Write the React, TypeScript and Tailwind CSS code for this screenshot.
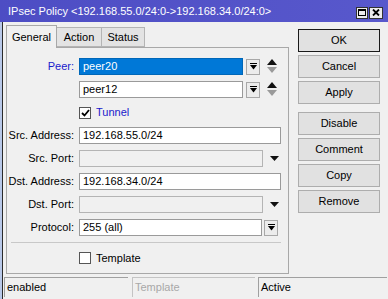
import React from 'react';

const font = "font-['Liberation_Sans',Arial,sans-serif]";

const DropBtn = () => (
  <div className="w-[14px] h-[16px] border border-[#a8a8a8] bg-[#ececec] flex items-center justify-center">
    <svg width="7" height="7" viewBox="0 0 7 7">
      <rect x="0" y="0" width="7" height="1" fill="#000" />
      <polygon points="0,2 7,2 3.5,6.5" fill="#000" />
    </svg>
  </div>
);

const UpDown = () => (
  <svg width="10" height="15" viewBox="0 0 10 15">
    <polygon points="5,0 10,6 0,6" fill="#111" />
    <polygon points="0,8 10,8 5,14" fill="#9a9a9a" />
  </svg>
);

const DownTri = () => (
  <svg width="9" height="5" viewBox="0 0 9 5">
    <polygon points="0,0 9,0 4.5,5" fill="#111" />
  </svg>
);

const Label = ({ text, blue }: { text: string; blue?: boolean }) => (
  <div className={`w-[72px] pr-[5px] text-right ${blue ? 'text-[#1a1acc]' : 'text-black'}`}>{text}</div>
);

const Row = ({ children }: { children: React.ReactNode }) => (
  <div className="flex items-center h-[23px]">{children}</div>
);

const Input = ({ w, value, disabled, selected }: { w: string; value?: string; disabled?: boolean; selected?: boolean }) => (
  <div
    className={`${w} h-[17px] border flex items-center pl-[3px] ${
      selected
        ? 'bg-[#0078d7] border-[#0067b8] text-white'
        : disabled
        ? 'bg-[#f0f0f0] border-[#b4b4b4]'
        : 'bg-white border-[#9a9a9a] text-black'
    }`}
  >
    {value}
  </div>
);

const Check = ({ checked }: { checked?: boolean }) => (
  <div className="w-[12px] h-[12px] border border-[#555] bg-white flex items-center justify-center">
    {checked && (
      <svg width="9" height="8" viewBox="0 0 9 8">
        <polyline points="1,4 3.5,6.5 8,1" fill="none" stroke="#000" strokeWidth="1.8" />
      </svg>
    )}
  </div>
);

const Btn = ({ text, def, mt }: { text: string; def?: boolean; mt: string }) => (
  <div
    className={`${mt} w-[82px] h-[23px] flex items-center justify-center bg-[#e1e1e1] border ${
      def ? 'border-[#1a1a1a]' : 'border-[#adadad]'
    }`}
  >
    {text}
  </div>
);

export default function App() {
  return (
    <div className={`w-[388px] h-[299px] bg-[#f0f0f0] overflow-hidden text-[11px] leading-none ${font}`}>
      <div className="h-[22px] bg-gradient-to-r from-[#4d4dc4] to-[#5858cc] flex items-center justify-between pl-[8px] pr-[5px] text-white text-[11px]">
        <span>IPsec Policy &lt;192.168.55.0/24:0-&gt;192.168.34.0/24:0&gt;</span>
        <div className="flex gap-[1px] mt-[3px]">
          <div className="w-[12px] h-[12px] bg-[#ececec] border border-[#333] flex items-center justify-center">
            <div className="w-[8px] h-[7px] border border-black border-t-2" />
          </div>
          <div className="w-[14px] h-[12px] bg-[#ececec] border border-[#333] flex items-center justify-center">
            <svg width="8" height="7" viewBox="0 0 8 7">
              <path d="M1 0.5 L7 6.5 M7 0.5 L1 6.5" stroke="#000" strokeWidth="1.8" />
            </svg>
          </div>
        </div>
      </div>

      <div className="flex h-[277px]">
        <div className="w-[3px] bg-[#b8c8e8] border-r border-[#2a2a2a]" />
        <div className="flex flex-col">
          <div className="flex">
            <div className="pl-[3px] pt-[4px]">
              <div className="flex items-end h-[21px]">
                <div className="relative z-10 -mb-px w-[51px] h-[23px] bg-[#f0f0f0] border border-b-0 border-[#a8a8a8] flex items-center justify-center text-black">
                  General
                </div>
                <div className="w-[45px] h-[20px] bg-[#e3e3e3] border border-l-0 border-[#b4b4b4] flex items-center justify-center">
                  Action
                </div>
                <div className="w-[43px] h-[20px] bg-[#e3e3e3] border border-l-0 border-[#b4b4b4] flex items-center justify-center">
                  Status
                </div>
              </div>
              <div className="w-[283px] h-[227px] border border-[#a8a8a8] pt-[7px]">
                <Row>
                  <Label text="Peer:" blue />
                  <Input w="w-[164px]" value="peer20" selected />
                  <div className="ml-[3px]"><DropBtn /></div>
                  <div className="ml-[7px]"><UpDown /></div>
                </Row>
                <Row>
                  <div className="w-[72px]" />
                  <Input w="w-[164px]" value="peer12" />
                  <div className="ml-[3px]"><DropBtn /></div>
                  <div className="ml-[7px]"><UpDown /></div>
                </Row>
                <Row>
                  <div className="w-[72px]" />
                  <Check checked />
                  <span className="ml-[5px] text-[#1a1acc]">Tunnel</span>
                </Row>
                <Row>
                  <Label text="Src. Address:" />
                  <Input w="w-[202px]" value="192.168.55.0/24" />
                </Row>
                <Row>
                  <Label text="Src. Port:" />
                  <Input w="w-[184px]" disabled />
                  <div className="ml-[7px]"><DownTri /></div>
                </Row>
                <Row>
                  <Label text="Dst. Address:" />
                  <Input w="w-[202px]" value="192.168.34.0/24" />
                </Row>
                <Row>
                  <Label text="Dst. Port:" />
                  <Input w="w-[184px]" disabled />
                  <div className="ml-[7px]"><DownTri /></div>
                </Row>
                <Row>
                  <Label text="Protocol:" />
                  <Input w="w-[183px]" value="255 (all)" />
                  <div className="ml-[2px]"><DropBtn /></div>
                </Row>
                <div className="mt-[3px] ml-[4px] w-[270px] border-t border-[#c8c8c8]" />
                <div className="mt-[5px] h-[20px] flex items-center">
                  <div className="w-[72px]" />
                  <Check />
                  <span className="ml-[5px]">Template</span>
                </div>
              </div>
            </div>
            <div className="ml-[9px] pt-[7px] flex flex-col">
              <Btn text="OK" def mt="mt-0" />
              <Btn text="Cancel" mt="mt-[3px]" />
              <Btn text="Apply" mt="mt-[3px]" />
              <Btn text="Disable" mt="mt-[8px]" />
              <Btn text="Comment" mt="mt-[3px]" />
              <Btn text="Copy" mt="mt-[3px]" />
              <Btn text="Remove" mt="mt-[3px]" />
            </div>
          </div>
          <div className="mt-[3px] ml-[1px] flex h-[20px]">
            <div className="w-[124px] border-t border-l border-[#a0a0a0] pl-[2px] flex items-center">enabled</div>
            <div className="ml-[4px] w-[123px] border-t border-l border-[#c4c4c4] pl-[2px] flex items-center text-[#a8a8a8]">
              Template
            </div>
            <div className="ml-[3px] w-[129px] border-t border-l border-[#a0a0a0] pl-[2px] flex items-center">Active</div>
          </div>
        </div>
      </div>
    </div>
  );
}
